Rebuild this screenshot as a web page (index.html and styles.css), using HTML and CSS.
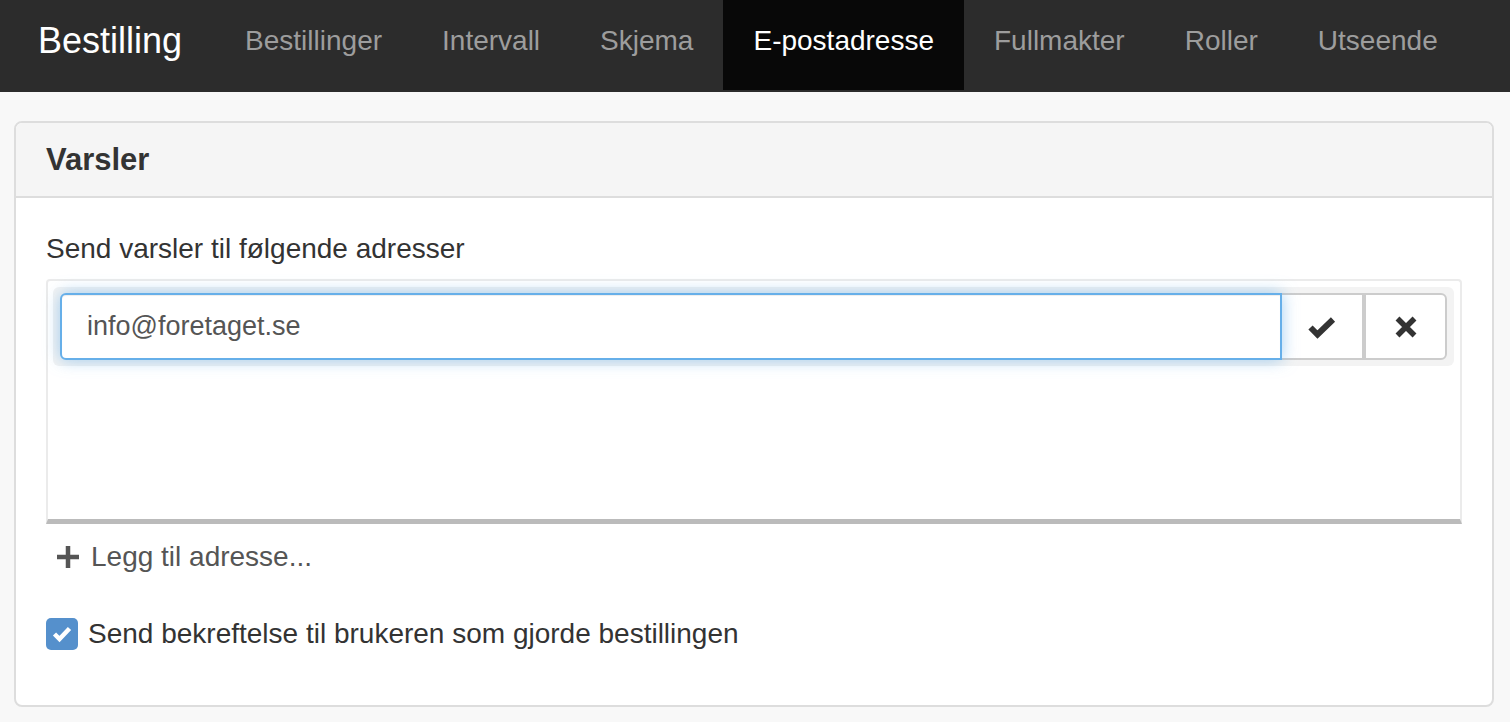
FILE: index.html
```html
<!DOCTYPE html>
<html lang="no">
<head>
    <meta charset="UTF-8">
    <meta name="viewport" content="width=device-width, initial-scale=1.0">
    <title>Bestilling</title>
    <link rel="stylesheet" href="styles.css">
</head>
<body>

    <nav class="navbar">
        <a class="brand" href="#">Bestilling</a>
        <a class="nav-link" href="#">Bestillinger</a>
        <a class="nav-link" href="#">Intervall</a>
        <a class="nav-link" href="#">Skjema</a>
        <a class="nav-link active" href="#">E-postadresse</a>
        <a class="nav-link" href="#">Fullmakter</a>
        <a class="nav-link" href="#">Roller</a>
        <a class="nav-link" href="#">Utseende</a>
    </nav>

    <div class="page">
        <div class="panel">
            <div class="panel-heading">Varsler</div>
            <div class="panel-body">
                <div class="field-label">Send varsler til følgende adresser</div>

                <div class="address-list">
                    <div class="address-row">
                        <div class="input-group">
                            <input class="address-input" type="text" value="info@foretaget.se">
                            <button class="icon-button" title="Lagre">
                                <svg width="30" height="24" viewBox="0 0 30 24">
                                    <polyline points="3.5,12.5 10.5,19.5 26,4.5" fill="none" stroke="#333" stroke-width="6"/>
                                </svg>
                            </button>
                            <button class="icon-button last" title="Fjern">
                                <svg width="24" height="24" viewBox="0 0 24 24">
                                    <path d="M3.5 3.5 L20.5 20.5 M20.5 3.5 L3.5 20.5" fill="none" stroke="#333" stroke-width="5.5"/>
                                </svg>
                            </button>
                        </div>
                    </div>
                </div>

                <a class="add-link" href="#">
                    <svg width="26" height="24" viewBox="0 0 26 24">
                        <path d="M13 1 V23 M2 12 H24" fill="none" stroke="#555" stroke-width="4.5"/>
                    </svg>
                    Legg til adresse...
                </a>

                <label class="check-row">
                    <span class="checkbox">
                        <svg width="22" height="20" viewBox="0 0 22 20">
                            <polyline points="3.5,10 8.5,15 18.5,4.5" fill="none" stroke="#fff" stroke-width="4.5"/>
                        </svg>
                    </span>
                    Send bekreftelse til brukeren som gjorde bestillingen
                </label>
            </div>
        </div>
    </div>

</body>
</html>
```

FILE: styles.css
```css
body {
    margin: 0;
    font-family: "Liberation Sans", Arial, sans-serif;
    background-color: #f8f8f8;
    color: #333;
}

/* Top navigation */
.navbar {
    display: flex;
    align-items: stretch;
    height: 92px;
    background-color: #2c2c2c;
}

.brand {
    display: flex;
    align-items: center;
    padding: 0 33px 10px 38px;
    font-size: 36px;
    color: #fff;
    text-decoration: none;
}

.nav-link {
    display: flex;
    align-items: center;
    height: 90px;
    padding: 0 30px 9px 30px;
    font-size: 28px;
    color: #9d9d9d;
    text-decoration: none;
    box-sizing: border-box;
}

.nav-link.active {
    background-color: #080808;
    color: #fff;
}

/* Panel */
.page {
    padding: 29px 16px 0 14px;
}

.panel {
    background-color: #fff;
    border: 2px solid #ddd;
    border-radius: 8px;
}

.panel-heading {
    height: 73px;
    padding: 0 30px;
    display: flex;
    align-items: center;
    background-color: #f5f5f5;
    border-bottom: 2px solid #ddd;
    border-radius: 6px 6px 0 0;
    font-size: 31px;
    font-weight: bold;
}

.panel-body {
    padding: 35px 30px 55px 30px;
    display: flex;
    flex-direction: column;
}

.field-label {
    font-size: 28px;
    line-height: 32px;
    margin-bottom: 14px;
}

/* Address list */
.address-list {
    height: 232px;
    border: 2px solid #ebebeb;
    border-bottom: 5px solid #bbb;
    border-radius: 4px 4px 0 0;
    padding: 6px 6px 0 5px;
}

.address-row {
    background-color: #f3f3f3;
    border-radius: 6px;
    padding: 6px 7px;
}

.input-group {
    display: flex;
    height: 67px;
}

.address-input {
    flex: 1;
    min-width: 0;
    margin: 0;
    padding: 0 25px;
    font-family: "Liberation Sans", Arial, sans-serif;
    font-size: 27px;
    color: #555;
    border: 2px solid #66afe9;
    border-radius: 6px 0 0 6px;
    outline: none;
    box-shadow: inset 0 1px 1px rgba(0, 0, 0, 0.075), 0 0 16px rgba(102, 175, 233, 0.6);
    position: relative;
    z-index: 1;
}

.icon-button {
    width: 82px;
    margin: 0;
    padding: 0;
    display: flex;
    align-items: center;
    justify-content: center;
    background-color: #fff;
    border: 2px solid #ccc;
    border-left: none;
}

.icon-button.last {
    width: 83px;
    border-left: 2px solid #ccc;
    border-radius: 0 6px 6px 0;
}

/* Add link */
.add-link {
    display: flex;
    align-items: center;
    gap: 10px;
    margin: 17px 0 0 9px;
    font-size: 28px;
    line-height: 32px;
    color: #555;
    text-decoration: none;
}

/* Checkbox */
.check-row {
    display: flex;
    align-items: center;
    gap: 10px;
    margin-top: 45px;
    font-size: 28px;
    line-height: 32px;
}

.checkbox {
    width: 32px;
    height: 32px;
    border-radius: 5px;
    background-color: #5590cc;
    display: flex;
    align-items: center;
    justify-content: center;
}
```
